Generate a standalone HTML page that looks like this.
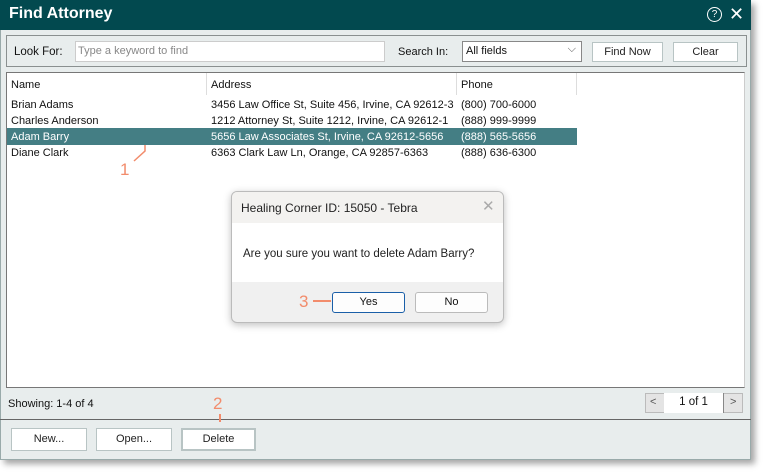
<!DOCTYPE html>
<html><head><style>
*{box-sizing:border-box;margin:0;padding:0}
body{width:765px;height:475px;background:#fff;font-family:"Liberation Sans",sans-serif;font-size:11px;color:#111;position:relative;overflow:hidden}
.abs{position:absolute}
.win{left:0;top:0;width:751px;height:460px;background:#e8eded;border:1px solid #9aa;box-shadow:4px 4px 6px rgba(0,0,0,.35)}
.title{left:0;top:0;width:751px;height:30px;background:#02494f;color:#fff;font-weight:bold;font-size:16px;padding:5px 9px}
.grp{left:6px;top:35px;width:741px;height:32px;border:1px solid #8a9090}
.btn{position:absolute;background:#fff;border:1px solid #b8c4c4;text-align:center;font-size:11px;color:#222}
.list{left:6px;top:72px;width:739px;height:316px;background:#fff;border:1px solid #777;border-right-color:#ccc}
.row{position:absolute;left:0;height:16px;line-height:16px;width:570px}
.row span{position:absolute}
.sel{background:#447e84;color:#fff}
.or{color:#f28c6c;font-size:17px}
</style></head><body>
<div class="abs win"></div>
<div class="abs title">Find Attorney</div>
<div class="abs" style="left:707px;top:7px;width:15px;height:15px;border:1.3px solid #fff;border-radius:50%;color:#fff;font-size:10px;text-align:center;line-height:13px">?</div>
<div class="abs" style="left:729px;top:4px;color:#fff;font-size:18px;font-weight:300">✕</div>
<div class="abs grp"></div>
<div class="abs" style="left:14px;top:46px;font-size:11.5px">Look For:</div>
<div class="abs" style="left:75px;top:41px;width:310px;height:21px;background:#fff;border:1px solid #ccc;color:#888;padding:3px 2px;font-size:11px">Type a keyword to find</div>
<div class="abs" style="left:398px;top:46px">Search In:</div>
<div class="abs" style="left:462px;top:41px;width:120px;height:21px;background:#fff;border:1px solid #888;padding:3px 3px">All fields<span style="position:absolute;right:5px;top:1px;color:#555">⌵</span></div>
<div class="btn" style="left:592px;top:42px;width:71px;height:20px;line-height:18px">Find Now</div>
<div class="btn" style="left:673px;top:42px;width:65px;height:20px;line-height:18px">Clear</div>
<div class="abs list">
 <div class="row" style="top:4px"><span style="left:4px">Name</span><span style="left:204px">Address</span><span style="left:454px">Phone</span></div>
 <div class="abs" style="left:199px;top:0;width:1px;height:22px;background:#ddd"></div>
 <div class="abs" style="left:449px;top:0;width:1px;height:22px;background:#ddd"></div>
 <div class="abs" style="left:569px;top:0;width:1px;height:22px;background:#ddd"></div>
 <div class="row" style="top:24px"><span style="left:4px">Brian Adams</span><span style="left:204px">3456 Law Office St, Suite 456, Irvine, CA 92612-3</span><span style="left:454px">(800) 700-6000</span></div>
 <div class="row" style="top:40px"><span style="left:4px">Charles Anderson</span><span style="left:204px">1212 Attorney St, Suite 1212, Irvine, CA 92612-1</span><span style="left:454px">(888) 999-9999</span></div>
 <div class="row sel" style="top:55px;height:17px;line-height:18px"><span style="left:4px">Adam Barry</span><span style="left:204px">5656 Law Associates St, Irvine, CA 92612-5656</span><span style="left:454px">(888) 565-5656</span></div>
 <div class="row" style="top:72px"><span style="left:4px">Diane Clark</span><span style="left:204px">6363 Clark Law Ln, Orange, CA 92857-6363</span><span style="left:454px">(888) 636-6300</span></div>
</div>
<svg class="abs" style="left:110px;top:144px" width="50" height="36"><path d="M35 1 V7 L24 17" stroke="#f28c6c" stroke-width="1.5" fill="none"/><text x="10" y="31" fill="#f28c6c" font-size="17" font-family="Liberation Sans">1</text></svg>
<div class="abs" style="left:8px;top:398px">Showing: 1-4 of 4</div>
<div class="abs" style="left:645px;top:393px;width:98px;height:20px;border:1px solid #bbb;background:#e4e4e4"></div>
<div class="abs" style="left:650px;top:396px;color:#555">&lt;</div>
<div class="abs" style="left:664px;top:393px;width:60px;height:20px;background:#fff;border-right:1px solid #888;text-align:center;line-height:19px;font-size:11.5px">1 of 1</div>
<div class="abs" style="left:730px;top:396px;color:#555">&gt;</div>
<div class="abs" style="left:0;top:419px;width:751px;height:1px;background:#666"></div>
<div class="abs or" style="left:213px;top:394px">2</div>
<div class="abs" style="left:219px;top:414px;width:1.5px;height:8px;background:#f28c6c"></div>
<div class="btn" style="left:11px;top:428px;width:76px;height:23px;line-height:21px">New...</div>
<div class="btn" style="left:96px;top:428px;width:76px;height:23px;line-height:21px">Open...</div>
<div class="btn" style="left:181px;top:428px;width:75px;height:23px;line-height:19px;border:2px solid #b8c4c4">Delete</div>
<div class="abs" style="left:231px;top:191px;width:273px;height:132px;background:#f0f0f0;border:1px solid #bbb;border-radius:6px;box-shadow:0 2px 8px rgba(0,0,0,.25);overflow:hidden">
 <div class="abs" style="left:0;top:0;width:272px;height:31px;background:#f3f2f0"></div>
 <div class="abs" style="left:9px;top:9px;font-size:12px;color:#222">Healing Corner ID: 15050 - Tebra</div>
 <div class="abs" style="left:250px;top:5px;color:#aaa;font-size:15px">✕</div>
 <div class="abs" style="left:0;top:31px;width:272px;height:59px;background:#fff"></div>
 <div class="abs" style="left:11px;top:56px;font-size:11.5px;color:#222">Are you sure you want to delete Adam Barry?</div>
 <div class="abs" style="left:100px;top:100px;width:73px;height:21px;background:#fdfdfd;border:1px solid #1a5fa8;border-radius:3px;text-align:center;line-height:19px">Yes</div>
 <div class="abs" style="left:183px;top:100px;width:73px;height:21px;background:#fdfdfd;border:1px solid #bbb;border-radius:3px;text-align:center;line-height:19px">No</div>
</div>
<div class="abs or" style="left:299px;top:292px">3</div>
<div class="abs" style="left:313px;top:300px;width:18px;height:1.5px;background:#f28c6c"></div>
</body></html>
